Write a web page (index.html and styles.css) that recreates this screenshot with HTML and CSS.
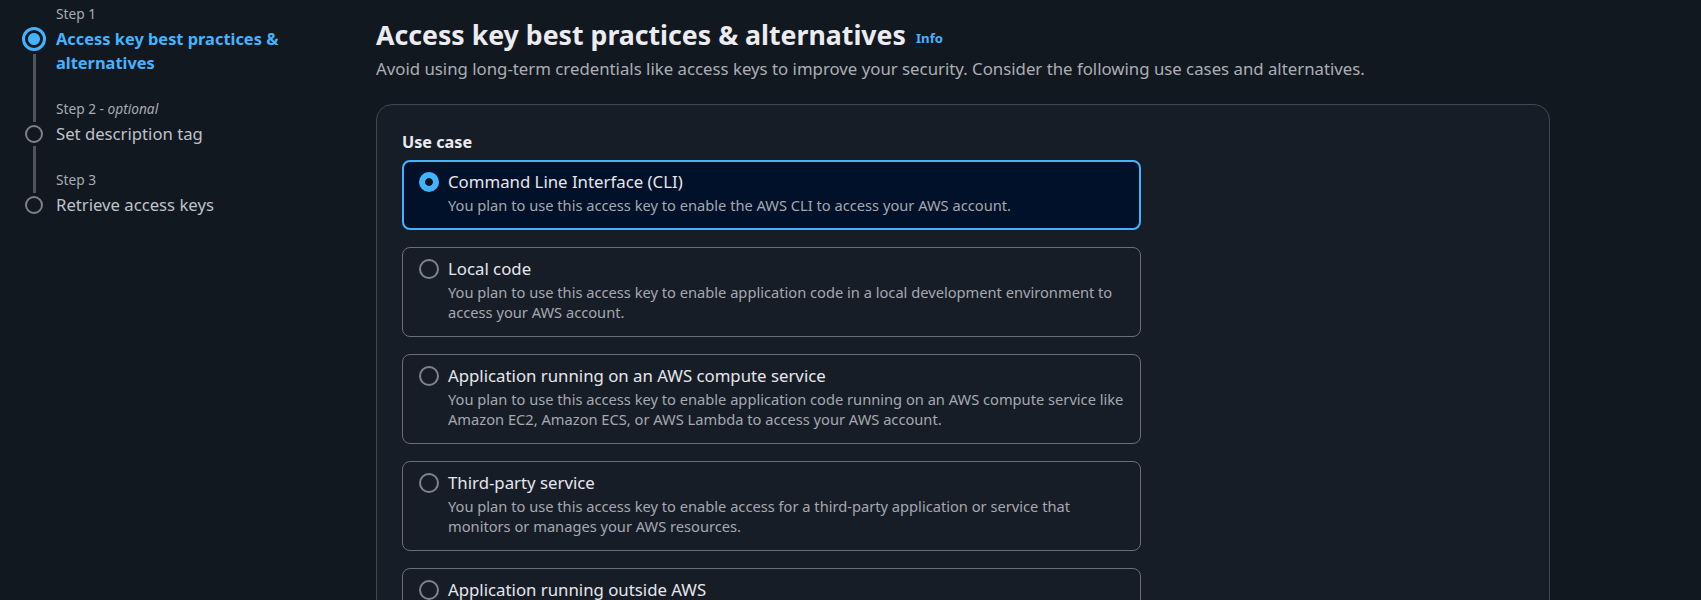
FILE: index.html
```html
<!DOCTYPE html>
<html lang="en">
<head>
<meta charset="utf-8">
<title>Create access key</title>
<link rel="stylesheet" href="styles.css">
</head>
<body>
<div class="layout">
  <nav class="steps">
    <div class="step">
      <span class="rail-top"></span>
      <div class="step-label">Step 1</div>
      <div class="marker"><span class="dot dot-active"></span><span class="rail"></span></div>
      <div class="step-title step-title-active">Access key best practices &amp; alternatives</div>
    </div>
    <div class="step">
      <span class="rail-top rail-on"></span>
      <div class="step-label">Step 2 - <em>optional</em></div>
      <div class="marker"><span class="dot"></span><span class="rail"></span></div>
      <div class="step-title">Set description tag</div>
    </div>
    <div class="step step-last">
      <span class="rail-top rail-on"></span>
      <div class="step-label">Step 3</div>
      <div class="marker"><span class="dot"></span></div>
      <div class="step-title">Retrieve access keys</div>
    </div>
  </nav>

  <main class="main">
    <h1 class="page-title">Access key best practices &amp; alternatives<a class="info" href="#">Info</a></h1>
    <p class="page-desc">Avoid using long-term credentials like access keys to improve your security. Consider the following use cases and alternatives.</p>

    <section class="container">
      <div class="field-label">Use case</div>
      <div class="tiles">
        <label class="tile tile-selected">
          <span class="radio radio-checked"></span>
          <span class="tile-title">Command Line Interface (CLI)</span>
          <span class="tile-desc">You plan to use this access key to enable the AWS CLI to access your AWS account.</span>
        </label>
        <label class="tile">
          <span class="radio"></span>
          <span class="tile-title">Local code</span>
          <span class="tile-desc">You plan to use this access key to enable application code in a local development environment to access your AWS account.</span>
        </label>
        <label class="tile">
          <span class="radio"></span>
          <span class="tile-title">Application running on an AWS compute service</span>
          <span class="tile-desc">You plan to use this access key to enable application code running on an AWS compute service like Amazon EC2, Amazon ECS, or AWS Lambda to access your AWS account.</span>
        </label>
        <label class="tile">
          <span class="radio"></span>
          <span class="tile-title">Third-party service</span>
          <span class="tile-desc">You plan to use this access key to enable access for a third-party application or service that monitors or manages your AWS resources.</span>
        </label>
        <label class="tile">
          <span class="radio"></span>
          <span class="tile-title">Application running outside AWS</span>
          <span class="tile-desc">You plan to use this access key to authenticate workloads running in your data center or other infrastructure outside of AWS that needs to access your AWS resources.</span>
        </label>
      </div>
    </section>
  </main>
</div>
</body>
</html>
```
FILE: styles.css
```css
html, body {
  margin: 0;
  padding: 0;
  overflow: hidden;
}
body {
  background: #121820;
  color: #c6c6cd;
  font-family: "Noto Sans", "Open Sans", sans-serif;
}
.layout {
  display: flex;
  align-items: flex-start;
  padding-left: 22px;
}

/* ---------- side navigation ---------- */
.steps {
  width: 354px;
  flex: none;
  padding-top: 4px;
}
.step {
  display: grid;
  grid-template-columns: 24px 1fr;
  column-gap: 10px;
}
.rail-top {
  grid-column: 1;
  grid-row: 1;
  justify-self: center;
  width: 3px;
}
.rail-on {
  background: #50535b;
}
.step-label {
  grid-column: 2;
  grid-row: 1;
  font-size: 13.7px;
  line-height: 20px;
  padding-bottom: 3px;
  color: #a8abb3;
}
.step-label em {
  font-style: italic;
}
.marker {
  grid-column: 1;
  grid-row: 2;
  display: flex;
  flex-direction: column;
  align-items: center;
  padding-top: 3px;
}
.dot {
  box-sizing: border-box;
  width: 18px;
  height: 18px;
  border-radius: 50%;
  border: 2px solid #7d8089;
  flex: none;
}
.dot-active {
  width: 24px;
  height: 24px;
  margin-top: -3px;
  border: 3px solid #42b4ff;
  background: radial-gradient(circle, #42b4ff 0 5.5px, transparent 6.5px);
}
.rail {
  flex: 1;
  width: 3px;
  margin-top: 3px;
  background: #50535b;
}
.step-title {
  grid-column: 2;
  grid-row: 2;
  font-size: 16.7px;
  line-height: 24px;
  color: #bfc2c9;
  padding-bottom: 24px;
}
.step-last .step-title {
  padding-bottom: 0;
}
.step-title-active {
  color: #42b4ff;
  font-weight: 700;
  font-size: 16.4px;
}

/* ---------- main ---------- */
.main {
  flex: 1;
  padding-top: 18px;
}
.page-title {
  margin: 0;
  font-size: 26.7px;
  line-height: 34px;
  font-weight: 700;
  color: #ebebf0;
}
.info {
  margin-left: 10px;
  font-size: 13.2px;
  font-weight: 700;
  color: #42b4ff;
  text-decoration: none;
  vertical-align: 2px;
}
.page-desc {
  margin: 2px 0 0;
  font-size: 16.8px;
  line-height: 24px;
  color: #acaeb5;
}
.container {
  margin-top: 23px;
  width: 1174px;
  box-sizing: border-box;
  background: #171d27;
  border: 1px solid #42464f;
  border-radius: 16px;
  padding: 26px 24px 24px 25px;
}
.field-label {
  font-size: 16.2px;
  font-weight: 700;
  line-height: 22px;
  color: #ebebf0;
  margin-bottom: 7px;
}
.tiles {
  display: flex;
  flex-direction: column;
  gap: 17px;
}
.tile {
  box-sizing: border-box;
  width: 739px;
  display: grid;
  grid-template-columns: 20px 1fr;
  column-gap: 9px;
  padding: 9px 12px 14px 16px;
  border: 1px solid #6b6e77;
  border-radius: 8px;
  background: transparent;
  cursor: pointer;
}
.tile-selected {
  border: 2px solid #42b4ff;
  background: #001129;
  padding: 8px 11px 13px 15px;
}
.radio {
  grid-column: 1;
  grid-row: 1;
  align-self: center;
  box-sizing: border-box;
  width: 20px;
  height: 20px;
  border-radius: 50%;
  border: 2px solid #80838c;
}
.radio-checked {
  border: none;
  background: radial-gradient(circle, #0f141a 0 3.5px, #42b4ff 4.3px);
}
.tile-title {
  grid-column: 2;
  grid-row: 1;
  font-size: 16.8px;
  line-height: 23px;
  color: #e6e6eb;
}
.tile-desc {
  grid-column: 2;
  grid-row: 2;
  margin-top: 2px;
  font-size: 14.66px;
  line-height: 20px;
  color: #a6a8b0;
}
```
